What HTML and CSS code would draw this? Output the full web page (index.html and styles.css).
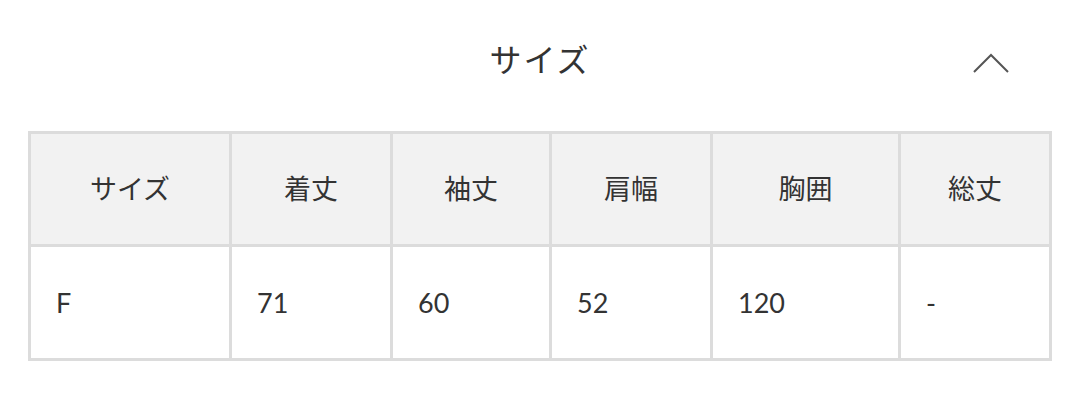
FILE: index.html
```html
<!DOCTYPE html>
<html lang="ja">
<head>
<meta charset="utf-8">
<link rel="stylesheet" href="styles.css">
</head>
<body>
<section class="size-section">
  <div class="size-head">
    <span></span>
    <h2 class="size-title">サイズ</h2>
    <span class="chevron">
      <svg width="38" height="22" viewBox="0 0 38 22"><polyline points="2,19 19,2 36,19" fill="none" stroke="#555" stroke-width="2"/></svg>
    </span>
  </div>
  <div class="size-table">
    <div class="cell th">サイズ</div>
    <div class="cell th">着丈</div>
    <div class="cell th">袖丈</div>
    <div class="cell th">肩幅</div>
    <div class="cell th">胸囲</div>
    <div class="cell th">総丈</div>
    <div class="cell td">F</div>
    <div class="cell td">71</div>
    <div class="cell td">60</div>
    <div class="cell td">52</div>
    <div class="cell td">120</div>
    <div class="cell td">-</div>
  </div>
</section>
</body>
</html>
```
FILE: styles.css
```css
html, body {
  margin: 0;
  padding: 0;
  background: #fff;
}
body {
  font-family: Lato, "Noto Sans CJK JP", sans-serif;
  color: #333;
}
.size-section {
  padding: 0 28px;
}
.size-head {
  height: 122px;
  display: grid;
  grid-template-columns: 1fr auto 1fr;
  align-items: center;
  margin-bottom: 9px;
}
.size-title {
  margin: 0 0 6px;
  font-family: "Noto Sans CJK JP", sans-serif;
  font-weight: 400;
  font-size: 32px;
  color: #333;
  letter-spacing: 2px;
}
.chevron {
  justify-self: end;
  margin-right: 42px;
  margin-top: 6px;
  display: flex;
}
.size-table {
  width: 1024px;
  box-sizing: border-box;
  display: grid;
  grid-template-columns: 198px 158px 156px 158px 185px 148px;
  grid-template-rows: 110px 111px;
  gap: 3px;
  padding: 3px;
  background: #dcdcdc;
}
.cell {
  display: flex;
  align-items: center;
  background: #fff;
}
.th {
  background: #f2f2f2;
  justify-content: center;
  font-family: "Noto Sans CJK JP", sans-serif;
  font-size: 27px;
  color: #333;
  padding-bottom: 3px;
}
.td {
  padding-left: 25px;
  font-size: 27px;
  color: #333;
}
```
